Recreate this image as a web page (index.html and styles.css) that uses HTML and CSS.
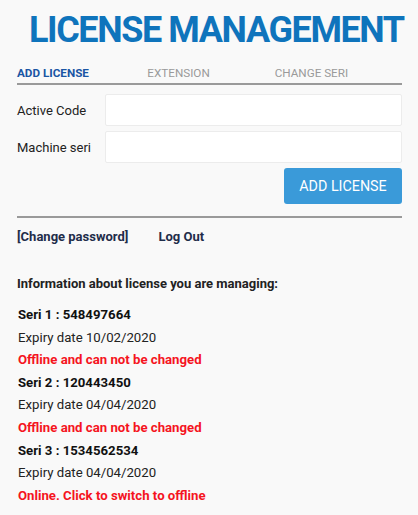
FILE: index.html
```html
<!DOCTYPE html>
<html>
<head>
<meta charset="utf-8">
<link rel="stylesheet" href="styles.css">
</head>
<body>
<div class="page">
  <h1 class="title">LICENSE MANAGEMENT</h1>
  <nav class="tabs">
    <a class="tab active">ADD LICENSE</a>
    <a class="tab">EXTENSION</a>
    <a class="tab">CHANGE SERI</a>
  </nav>
  <form class="form">
    <div class="row">
      <label class="label">Active Code</label>
      <input class="input" type="text">
    </div>
    <div class="row">
      <label class="label">Machine seri</label>
      <input class="input" type="text">
    </div>
    <div class="actions">
      <button class="btn" type="button">ADD LICENSE</button>
    </div>
  </form>
  <div class="links">
    <a class="link">[Change password]</a>
    <a class="link">Log Out</a>
  </div>
  <h2 class="info-title">Information about license you are managing:</h2>
  <ul class="licenses">
    <li class="license">
      <div class="seri">Seri 1 : 548497664</div>
      <div class="expiry">Expiry date 10/02/2020</div>
      <div class="status">Offline and can not be changed</div>
    </li>
    <li class="license">
      <div class="seri">Seri 2 : 120443450</div>
      <div class="expiry">Expiry date 04/04/2020</div>
      <div class="status">Offline and can not be changed</div>
    </li>
    <li class="license">
      <div class="seri">Seri 3 : 1534562534</div>
      <div class="expiry">Expiry date 04/04/2020</div>
      <div class="status">Online. Click to switch to offline</div>
    </li>
  </ul>
</div>
</body>
</html>
```

FILE: styles.css
```css
* { box-sizing: border-box; }
html, body {
  margin: 0;
  padding: 0;
  background: #f9f9f9;
  font-family: Roboto, "Liberation Sans", sans-serif;
  color: #222;
}
.page {
  padding: 8px 16px 0 17px;
}
.title {
  margin: 0;
  padding-left: 12px;
  text-align: center;
  white-space: nowrap;
  font-size: 36px;
  letter-spacing: -1.4px;
  font-weight: 700;
  color: #0f74bc;
  line-height: 44px;
}
.tabs {
  display: flex;
  margin-top: 14px;
  border-bottom: 2px solid #9a9a9a;
  padding-bottom: 3px;
}
.tab {
  font-size: 11.7px;
  line-height: 14px;
  color: #9a9a9a;
  width: 128px;
}
.tab.active {
  width: 131px;
  color: #1a56a4;
  font-weight: 700;
}
.form {
  margin-top: 9px;
  border-bottom: 2px solid #9a9a9a;
  padding-bottom: 12px;
}
.row {
  display: flex;
  align-items: center;
  margin-bottom: 5px;
}
.label {
  width: 88px;
  font-size: 13px;
  color: #222;
}
.input {
  flex: 1;
  height: 32px;
  border: 1px solid #ececec;
  border-radius: 2px;
  background: #fff;
  outline: none;
}
.actions {
  display: flex;
  justify-content: flex-end;
}
.btn {
  width: 118px;
  height: 36px;
  border: none;
  border-radius: 3px;
  background: #3a9ad9;
  color: #fff;
  font-family: inherit;
  font-size: 14.3px;
  padding: 0;
}
.links {
  display: flex;
  gap: 30px;
  margin-top: 11px;
  font-size: 13px;
  font-weight: 700;
  color: #1f2d4a;
}
.info-title {
  margin: 32px 0 0;
  font-size: 13px;
  font-weight: 700;
  color: #222;
  line-height: 16px;
}
.licenses {
  list-style: none;
  margin: 12px 0 0;
  padding: 0 0 0 1px;
}
.license > div {
  font-size: 13.2px;
  line-height: 22.6px;
}
.seri { font-weight: 700; color: #111; }
.expiry { color: #222; }
.status { color: #f5141e; font-weight: 700; }
```
